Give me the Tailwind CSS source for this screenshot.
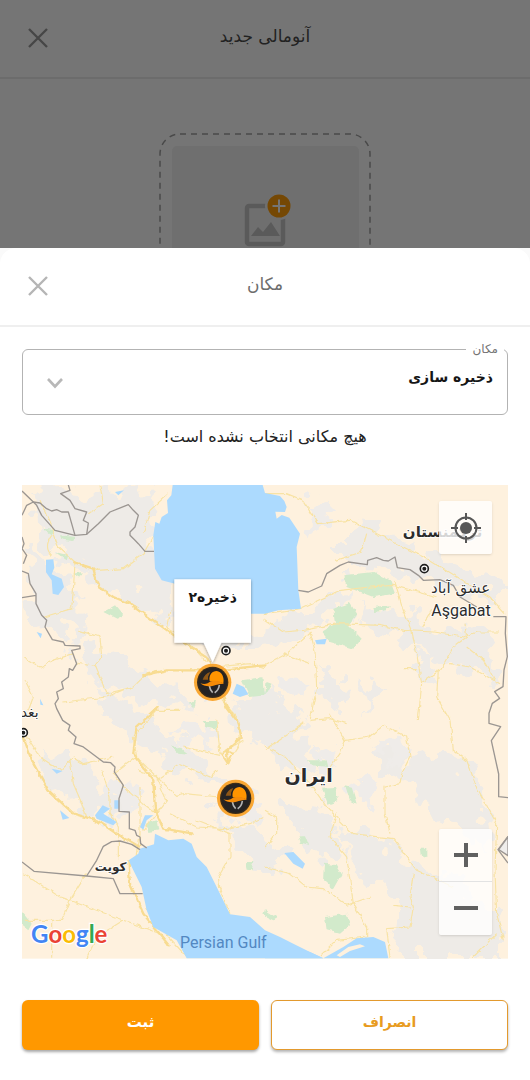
<!DOCTYPE html>
<html lang="fa">
<head>
<meta charset="utf-8">
<meta name="viewport" content="width=device-width, initial-scale=1">
<title>مکان</title>
<script src="https://cdn.jsdelivr.net/npm/@tailwindcss/browser@4"></script>
</head>
<body class="bg-[#fafafa] font-['DejaVu_Sans',sans-serif]">
<div class="flex min-h-screen flex-col">

  <!-- Dimmed page behind the sheet -->
  <div class="relative h-62 shrink-0 overflow-hidden bg-white">
    <header class="relative flex h-[79px] items-center justify-center border-b-2 border-[#ececec] pb-1">
      <h1 class="text-[17px] font-medium text-[#4a4a4a]" dir="rtl">آنومالی جدید</h1>
      <button aria-label="بستن" class="absolute left-7 top-7 text-[#9a9a9a]">
        <svg class="size-5" viewBox="0 0 20 20" fill="none" stroke="currentColor" stroke-width="2.4"><path d="M1 1 19 19M19 1 1 19"/></svg>
      </button>
    </header>
    <div class="mx-auto mt-[54px] w-[212px]">
      <svg class="block w-full" viewBox="0 0 212 200" fill="none">
        <rect x="1" y="1" width="210" height="220" rx="20" stroke="#a0a0a0" stroke-width="1.5" stroke-dasharray="6 5"/>
        <rect x="13" y="13" width="187" height="200" rx="5" fill="#f2f2f2"/>
        <rect x="88" y="73" width="36" height="38" rx="2" stroke="#c4c4c4" stroke-width="4.5"/>
        <path d="m92 103 7-9 5 5 8-10 9 14Z" fill="#c4c4c4"/>
        <circle cx="120" cy="73" r="14" fill="#f2f2f2"/>
        <circle cx="120" cy="73" r="11.5" fill="#ff9d0a"/>
        <path d="M113.500 73h13M120 66.500v13" stroke="#fff" stroke-width="2"/>
      </svg>
    </div>
    <div class="absolute inset-0 bg-black/54"></div>
  </div>

  <main class="flex-1 rounded-t-2xl bg-white">
    <header class="relative flex h-[79px] items-center justify-center border-b-2 border-[#efefef] pb-1">
      <h2 class="text-[17px] font-medium text-[#6d6d6d]" dir="rtl">مکان</h2>
      <button aria-label="بستن" class="absolute left-7 top-7 text-[#b5b5b5]">
        <svg class="size-5" viewBox="0 0 20 20" fill="none" stroke="currentColor" stroke-width="2.4"><path d="M1 1 19 19M19 1 1 19"/></svg>
      </button>
    </header>

    <div class="px-[22px] pt-[22px]">
      <div class="relative">
        <select id="place" dir="rtl" class="block h-[66px] w-full appearance-none rounded-md border border-[#b3b3b3] bg-white px-3.5 pb-2.5 text-[14px] font-bold text-[#161616]">
          <option>ذخیره سازی</option>
        </select>
        <label for="place" dir="rtl" class="absolute -top-2 right-1 bg-white px-1.5 text-[12px] leading-4 text-[#747474]">مکان</label>
        <svg class="pointer-events-none absolute left-6 top-7 h-3 w-[18px]" viewBox="0 0 18 12" fill="none" stroke="#b8b8b8" stroke-width="2.6"><path d="m2 2 7 7.500L16 2"/></svg>
      </div>

      <p dir="rtl" class="mt-2.5 text-center text-[16px] leading-6 text-[#222]">هیچ مکانی انتخاب نشده است!</p>

      <div class="relative mt-9">
        <svg class="block w-full" viewBox="6 14 1458 1421" role="img" aria-label="نقشه">
          <defs>
            <filter id="rough" x="-20%" y="-20%" width="140%" height="140%">
              <feTurbulence type="fractalNoise" baseFrequency="0.018" numOctaves="3" seed="4" result="n"/>
              <feDisplacementMap in="SourceGraphic" in2="n" scale="130" xChannelSelector="R" yChannelSelector="G"/>
            </filter>
            <filter id="wobble" x="-10%" y="-10%" width="120%" height="120%">
              <feTurbulence type="fractalNoise" baseFrequency="0.05" numOctaves="2" seed="8" result="n"/>
              <feDisplacementMap in="SourceGraphic" in2="n" scale="14" xChannelSelector="R" yChannelSelector="G"/>
            </filter>
            <filter id="lift" x="-20%" y="-20%" width="140%" height="150%"><feDropShadow dx="0" dy="3" stdDeviation="4" flood-opacity=".4"/></filter>
            <g id="helmet">
              <circle r="56" fill="#f9a733"/>
              <circle r="47" fill="#3b2c19"/>
              <circle r="43" fill="#252323"/>
              <path d="M-10 10Q-8 24 0 31M20 8Q18 24 6 31" fill="none" stroke="#b4b4b4" stroke-width="5"/>
              <path d="M-9-4C-12-22-2-34 12-34 27-33 36-15 32 3 20-3 4-3-9-4Z" fill="#ff9500"/>
              <path d="M-37 3C-24 7-14 4-6-3 8-7 24-3 34 4 20 5 12 7 2 10-12 14-28 12-37 3Z" fill="#f58b08"/>
              <path d="M-30-8Q-24-26-7-31L-14-17-14-8Z" fill="#8f5716"/>
            </g>
          </defs>
          <rect x="6" y="14" width="1458" height="1421" fill="#fef1de"/>

          <!-- Highlands -->
          <g fill="#eeebe7" filter="url(#rough)">
            <path d="M40 30 230 40 420 30 390 150 440 280 470 420 440 430 330 350 240 310 150 240 60 190Z"/>
            <path d="M10 200 90 260 170 330 160 500 80 470 20 370Z"/>
            <path d="M190 470 320 560 430 610 560 660 480 700 330 640 210 600 180 540Z"/>
            <path d="M240 620 380 700 480 790 560 850 620 930 540 900 420 830 330 790 260 700Z"/>
            <path d="M470 380 570 440 720 450 850 400 950 330 1000 330 850 470 700 500 560 500Z"/>
            <path d="M960 150 1050 130 1180 200 1330 260 1440 320 1440 370 1250 310 1080 270 960 260Z"/>
            <path d="M1000 390 1160 390 1250 450 1400 430 1440 600 1320 560 1170 500 1050 450Z"/>
            <path d="M640 640 800 660 850 720 750 790 650 760Z"/>
            <path d="M1190 830 1310 810 1390 950 1400 1110 1250 1000 1150 900Z"/>
            <path d="M950 1050 1080 1070 1190 1170 1290 1180 1440 1300 1440 1430 1120 1430 1140 1280 1050 1200Z"/>
            <path d="M790 960 880 970 940 1050 1000 1150 900 1120 820 1040Z"/>
            <path d="M60 810 190 850 300 960 280 1030 190 990 80 900Z"/>
            <path d="M560 960 700 1060 820 1130 740 1190 650 1100Z"/>
            <path d="M750 720 820 770 870 850 780 870 720 800ZM1080 820 1150 800 1170 900 1110 880ZM1180 540 1240 520 1260 610 1210 600ZM910 560 970 620 960 680 900 660ZM1030 600 1090 640 1050 690Z"/>
          </g>
          <g fill="#efece9" filter="url(#rough)">
            <path d="M450 730h90l30 50-80 20ZM650 930l80 30-30 70-60-40ZM870 830l60-20 20 50-60 20ZM1100 760l50 30-20 50-40-20ZM300 880l50 40-20 80-50-60ZM1020 880l50 20-20 90-50-60ZM780 570l70 20-10 60-70-30ZM860 90l60-20 20 40-50 40Z"/>
          </g>

          <!-- Parks -->
          <g fill="#d2eacb" filter="url(#wobble)">
            <path d="M970 285 1060 275 1110 300 1125 340 1060 350 980 320Z"/>
            <path d="M940 385 990 368 1010 400 985 435 1025 475 1000 505 930 485 905 455 945 430Z"/>
            <path d="M1060 380 1110 375 1100 390 1065 395ZM665 600 730 590 735 645 690 650Z"/>
            <path d="M250 395 285 375 310 405 290 415ZM70 145 105 150 95 165ZM120 165 165 170 160 182 125 178ZM105 215 145 225 140 240ZM160 280 185 275 178 292ZM510 670 525 660 520 685Z"/>
            <path d="M545 722h45v25l-30-5ZM450 795l30 8 25 20-30-3ZM905 925l40-2 10 40-30 10ZM975 915l20 5 15 50-20-10ZM835 1065l20 0 12 30-25-8ZM915 1150 950 1155 965 1180 940 1225 912 1200ZM915 1310 980 1300 990 1335 960 1360 920 1350ZM1200 1105h22v25l-20-5ZM675 1145h25l-5 25-15-2ZM380 1030 410 1020 415 1050 385 1055ZM6 1295 35 1330 25 1350 6 1335ZM735 1290l40 25-15 5-30-15ZM740 605l15 5-20 35ZM860 840h60l5 20-50-5Z"/>
          </g>

          <!-- Roads -->
          <g fill="none" stroke="#f8e3a4" stroke-width="3.500" stroke-linejoin="round" filter="url(#wobble)">
            <path d="M95 165Q70 200 95 225M60 60 90 130 115 200 165 245 230 270 310 265 370 220 410 150M240 15 250 70 205 100M370 160 390 90 445 40M165 245 160 330 155 385 70 410M175 450 240 470 245 530 225 555 165 545M225 555 260 640 340 620 380 580 430 570M10 530 60 560 100 540 160 520M15 600 40 650 25 690M330 620 260 650 130 665M450 390 440 440 500 480 560 545M590 560 690 550 730 565M605 660 650 710 660 790 620 850M480 690 410 690 340 770 350 830 410 890 470 945 490 940M730 400 840 385 960 330 1050 320 1120 315 1250 350M730 415 790 455 850 450 950 430 1080 435 1150 450 1240 455 1330 470 1370 455 1440 455"/>
            <path d="M735 40 800 40 850 60 895 130 990 120 1130 190 1230 240 1410 350 1455 400M945 240 1025 215 1040 160M1125 305 1150 390 1175 450 1190 520 1205 610 1195 720M870 455 885 510 890 620 870 720M735 555 800 520 875 455M1200 610 1260 570 1300 500 1340 470 1335 430M1290 550 1350 560 1440 610M1255 570 1250 650 1290 720M1340 500 1390 540 1425 600M1205 440 1235 390M1150 565h40M790 520 870 550M870 720 930 715 980 730M735 810 850 730M735 800 810 840 870 910 920 980 1000 1060 1120 1075 1190 1170 1300 1220M930 700 975 780 1050 770 1090 735 1160 770 1170 830 1145 880 1140 910 1095 920 1095 1000 1110 1060M975 780 960 820 930 860M1290 720 1300 810 1340 840 1370 920 1430 1030 1425 1170 1430 1300 1450 1380M950 1000 930 1070 980 1130 1000 1270 1040 1340 1040 1370 950 1380 900 1430M735 1160 810 1180 860 1220 910 1225 980 1275 1050 1250M735 990 770 1010 770 1060 735 1100M1180 1180 1170 1250 1180 1280 1170 1340 1100 1345 1110 1430M1170 1280 1120 1275M1430 1360 1360 1430"/>
            <path d="M15 760 60 830 120 870 160 830 190 850 280 830M150 840 160 910 190 980 200 1010M245 870 270 950 270 1000 295 1040 295 1140M345 830 280 880 320 930 370 970 410 1000M355 870 410 890 440 960 370 1050M410 900 480 850 570 890 590 870M450 1000 530 1040 620 1045 690 1030 730 1010M490 940 600 950M530 1020 630 1060 630 1130 595 1190 600 1230 630 1300M10 1180 120 1250 230 1290 310 1320 420 1360M200 1180 150 1260 125 1320 15 1320M310 1320 230 1370 200 1435M95 1325 95 1435M590 715 600 820 670 780M490 800 600 825M360 920 360 1060 350 1140M380 1280 420 1340 500 1430"/>
          </g>
          <g fill="none" stroke="#f8dc92" stroke-width="7" stroke-linejoin="round" filter="url(#wobble)">
            <path d="M160 245 220 265 235 320 280 350 330 370 400 420 490 485 560 530 580 570M370 585 440 570 590 570 735 555M585 580 620 680 650 720 665 770 620 810 625 850M415 680 350 740 340 820 370 860 400 900 405 990 430 1045 520 1060M10 770 40 850 85 930 160 1000 230 1020 290 1060 360 1100M325 1140 330 1210 370 1300 410 1350 450 1400"/>
            <path d="M620 810 605 820 625 850 640 820Z" stroke-width="5"/>
          </g>

          <!-- Water -->
          <g fill="#acdafe">
            <path d="M458 14 454 45 441 60 444 98 425 110 418 130 406 125 400 165 405 265 425 300 470 312 560 400 735 400 775 390 843 385 835 330 830 200 840 160 808 112 785 104 770 115 766 94 795 95 800 80 793 62 780 47 735 38 728 14Z"/>
            <path d="M326 1140 355 1120 360 1105 402 1092 405 1060 445 1080 490 1075 515 1090 530 1130 560 1160 590 1220 630 1302 690 1310 735 1350 780 1370 820 1390 870 1415 910 1434 500 1434 470 1380 400 1340 380 1290 365 1220 340 1170Z"/>
            <path d="M735 1363 780 1380 820 1403 870 1415 910 1434H735Z"/>
            <path d="M910 1434 970 1400 1010 1374 1060 1370 1095 1385 1105 1434Z"/>
            <path d="M78 238 100 237 103 262 95 282 125 295 132 320 115 344 98 340 95 300 78 276ZM638 640 650 610 672 620 685 642 660 650ZM50 455 66 460 62 474ZM60 655l10 20-9-2ZM95 865 128 872 110 880ZM120 990 148 1013 128 1018ZM225 1005 248 975 270 985 250 1000 290 1025 280 1035 230 1015ZM283 960h15v25h-15ZM360 1040 375 1005 400 1005 380 1020 370 1048ZM885 480 920 475 915 492 890 492ZM793 1118 820 1115 855 1150 848 1165 820 1150ZM285 35 312 30 295 45Z"/>
          </g>
          <path d="M950 1425 985 1400 1020 1392 1035 1398 990 1412 960 1430Z" fill="#fef1de"/>

          <!-- Borders -->
          <g fill="none" stroke="#9b9692" stroke-width="4" stroke-linejoin="round">
            <path d="M6 32 30 55 50 75 65 105 105 150 165 165 200 162 235 130 270 95 325 73 340 90 355 105 345 140 330 155 330 165 345 180 355 190 375 213 402 213"/>
            <path d="M6 105 20 75 40 65 60 68 80 85 95 92 110 88 125 95 145 95 155 130 165 165M145 14 150 30 122 40 150 60 165 85 200 95 190 120 205 128 200 162"/>
            <path d="M6 170 12 190 6 205 20 225 10 250M6 272 25 280 30 310 48 340 48 370 65 405 80 420 75 440 97 478 130 485 135 495 180 497 180 505 155 510 170 550 158 570 148 565 145 590 125 605 130 625 110 635 115 655 105 670 110 685 128 720 150 735 145 750 168 770 162 790 190 800 250 845 272 847 285 860 283 875 310 915 297 955 297 993 328 995 328 1045 345 1050 350 1065 360 1070 362 1090 380 1103M6 352 48 345"/>
            <path d="M6 1145 42 1173 200 1187 280 1195 300 1240 368 1240M200 1187 230 1140 250 1098 275 1084 300 1082 335 1092 360 1108"/>
            <path d="M835 330 865 335 905 317 920 280 960 255 985 245 1042 253 1043 240 1070 232 1090 240 1105 242 1125 230 1132 262 1170 268 1195 285 1210 300 1260 298M1260 298 1300 315 1320 350 1370 380M1420 409h38l-2 50 6 70-10 40-3 50-25 15 15 20-22 15-10 30 0 30 35 10-28 42 22 100v68l30 3M1464 1068 1434 1108 1464 1148"/>
          </g>
          <path d="m1464 1070-28 38 28 18Z" fill="#efedeb" stroke="#9b9692" stroke-width="4"/>

          <!-- City markers -->
          <g fill="#fff" stroke="#1d1d1d" stroke-width="5">
            <circle cx="618" cy="511" r="12"/><circle cx="1213" cy="265" r="12"/><circle cx="10" cy="757" r="12"/>
            <g fill="#1d1d1d" stroke="none"><circle cx="618" cy="511" r="6"/><circle cx="1213" cy="265" r="6"/><circle cx="10" cy="757" r="6"/></g>
          </g>

          <!-- Place names -->
          <g fill="#2c2c2c" stroke="#fff" stroke-width="5" stroke-linejoin="round" paint-order="stroke" font-family="'DejaVu Sans', sans-serif" text-anchor="middle">
            <text x="1268" y="170" font-size="45" font-weight="bold">ترکمنستان</text>
            <text x="1322" y="337" font-size="45">عشق آباد</text>
            <text x="1323" y="407" font-size="48" font-family="Roboto, sans-serif">Aşgabat</text>
            <text x="866" y="906" font-size="57" font-weight="bold">ایران</text>
            <text x="272" y="1172" font-size="36" font-weight="bold">کویت</text>
            <text x="14" y="710" font-size="42">بغداد</text>
          </g>
          <text x="480" y="1403" font-family="Roboto, sans-serif" font-size="48" fill="#5388c2">Persian Gulf</text>
          <text x="33" y="1388" font-family="Lato, sans-serif" font-size="72" font-weight="bold" stroke="#fff" stroke-width="7" paint-order="stroke"><tspan fill="#4285f4">G</tspan><tspan fill="#ea4335">o</tspan><tspan fill="#fbbc05">o</tspan><tspan fill="#4285f4">g</tspan><tspan fill="#34a853">l</tspan><tspan fill="#ea4335">e</tspan></text>

          <!-- Pins and callout -->
          <use href="#helmet" x="578" y="606"/>
          <use href="#helmet" x="647" y="954"/>
          <path d="M463 297H693V487H604L578 546 551 487H463Z" fill="#fff" filter="url(#lift)"/>
          <text x="578" y="364" font-family="'DejaVu Sans', sans-serif" font-size="42" font-weight="bold" text-anchor="middle" fill="#161616" direction="rtl">ذخیره۲</text>
        </svg>

        <button aria-label="موقعیت من" class="absolute right-4 top-4 flex size-[53px] items-center justify-center rounded-xs bg-white/80 text-[#575757] shadow-sm">
          <svg class="size-[30px]" viewBox="0 0 30 30" fill="none" stroke="currentColor" stroke-width="2"><circle cx="15" cy="15" r="10.500"/><circle cx="15" cy="15" r="6" fill="currentColor" stroke="none"/><path d="M15 0v7M15 23v7M0 15h7M23 15h7"/></svg>
        </button>
        <div class="absolute bottom-6 right-4 flex w-[53px] flex-col divide-y divide-[#e3e3e3] rounded-xs bg-white/80 text-[#606060] shadow-sm">
          <button aria-label="بزرگ‌نمایی" class="flex h-[53px] items-center justify-center">
            <svg class="size-6" viewBox="0 0 24 24" fill="none" stroke="currentColor" stroke-width="4"><path d="M0 12h24M12 0v24"/></svg>
          </button>
          <button aria-label="کوچک‌نمایی" class="flex h-[53px] items-center justify-center">
            <svg class="size-6" viewBox="0 0 24 24" fill="none" stroke="currentColor" stroke-width="4"><path d="M0 12h24"/></svg>
          </button>
        </div>
      </div>

      <div class="mt-[41px] grid grid-cols-2 gap-3 pb-7">
        <button dir="rtl" class="h-[50px] rounded-md bg-[#ff9800] pb-1 text-[15px] font-bold text-white shadow-[0_2px_3px_rgba(0,0,0,0.35)]">ثبت</button>
        <button dir="rtl" class="h-[50px] rounded-md border border-[#e39a2e] bg-white pb-1 text-[14px] font-bold text-[#e89b20] shadow-[0_2px_3px_rgba(0,0,0,0.3)]">انصراف</button>
      </div>
    </div>
  </main>
</div>
</body>
</html>
